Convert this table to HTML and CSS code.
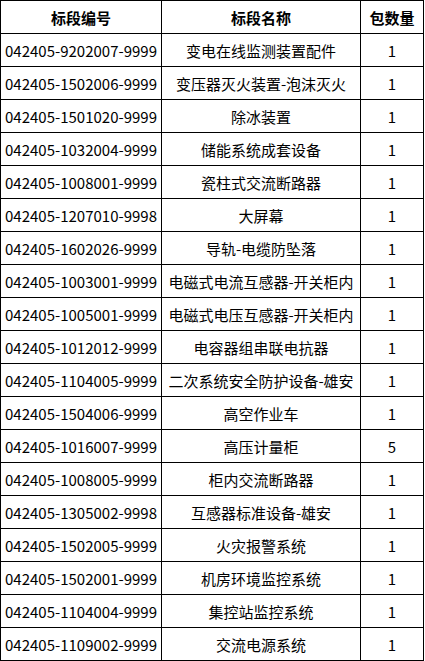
FILE: index.html
```html
<!DOCTYPE html>
<html lang="zh-CN">
<head>
<meta charset="utf-8">
<title>标段列表</title>
<link rel="stylesheet" href="styles.css">
</head>
<body>
<div class="table">
  <div class="cell head">标段编号</div><div class="cell head">标段名称</div><div class="cell head">包数量</div>
  <div class="cell">042405-9202007-9999</div><div class="cell">变电在线监测装置配件</div><div class="cell">1</div>
  <div class="cell">042405-1502006-9999</div><div class="cell">变压器灭火装置-泡沫灭火</div><div class="cell">1</div>
  <div class="cell">042405-1501020-9999</div><div class="cell">除冰装置</div><div class="cell">1</div>
  <div class="cell">042405-1032004-9999</div><div class="cell">储能系统成套设备</div><div class="cell">1</div>
  <div class="cell">042405-1008001-9999</div><div class="cell">瓷柱式交流断路器</div><div class="cell">1</div>
  <div class="cell">042405-1207010-9998</div><div class="cell">大屏幕</div><div class="cell">1</div>
  <div class="cell">042405-1602026-9999</div><div class="cell">导轨-电缆防坠落</div><div class="cell">1</div>
  <div class="cell">042405-1003001-9999</div><div class="cell">电磁式电流互感器-开关柜内</div><div class="cell">1</div>
  <div class="cell">042405-1005001-9999</div><div class="cell">电磁式电压互感器-开关柜内</div><div class="cell">1</div>
  <div class="cell">042405-1012012-9999</div><div class="cell">电容器组串联电抗器</div><div class="cell">1</div>
  <div class="cell">042405-1104005-9999</div><div class="cell">二次系统安全防护设备-雄安</div><div class="cell">1</div>
  <div class="cell">042405-1504006-9999</div><div class="cell">高空作业车</div><div class="cell">1</div>
  <div class="cell">042405-1016007-9999</div><div class="cell">高压计量柜</div><div class="cell">5</div>
  <div class="cell">042405-1008005-9999</div><div class="cell">柜内交流断路器</div><div class="cell">1</div>
  <div class="cell">042405-1305002-9998</div><div class="cell">互感器标准设备-雄安</div><div class="cell">1</div>
  <div class="cell">042405-1502005-9999</div><div class="cell">火灾报警系统</div><div class="cell">1</div>
  <div class="cell">042405-1502001-9999</div><div class="cell">机房环境监控系统</div><div class="cell">1</div>
  <div class="cell">042405-1104004-9999</div><div class="cell">集控站监控系统</div><div class="cell">1</div>
  <div class="cell">042405-1109002-9999</div><div class="cell">交流电源系统</div><div class="cell">1</div>
</div>
</body>
</html>
```

FILE: styles.css
```css
html, body {
  margin: 0;
  padding: 0;
  background: #fff;
}
body {
  font-family: "Noto Sans CJK SC", "Noto Sans", sans-serif;
  font-size: 15px;
  color: #000;
}
.table {
  display: grid;
  grid-template-columns: 161px 199px 63px;
  grid-auto-rows: 33px;
  width: 424px;
  box-sizing: border-box;
  border-left: 1px solid #000;
  border-top: 1px solid #000;
}
.cell {
  display: flex;
  align-items: center;
  justify-content: center;
  box-sizing: border-box;
  border-right: 1px solid #000;
  border-bottom: 1px solid #000;
  white-space: nowrap;
  line-height: 1;
}
.head {
  font-weight: 700;
}
```
